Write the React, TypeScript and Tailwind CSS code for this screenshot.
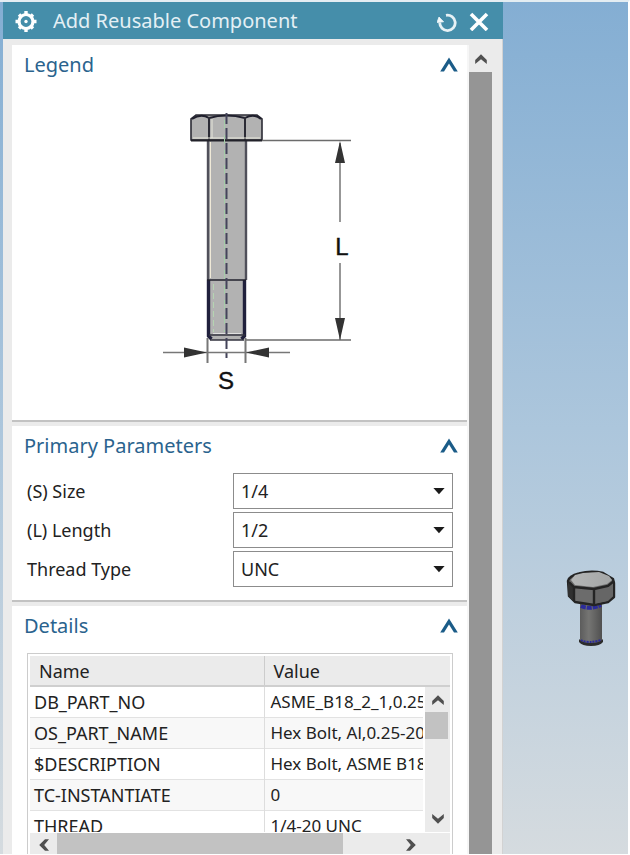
import React from "react";

const sizes = ["1/4", "5/16", "3/8", "1/2"];
const lengths = ["1/2", "3/4", "1", "1 1/4"];
const threads = ["UNC", "UNF"];

const details = [
  { name: "DB_PART_NO", value: "ASME_B18_2_1,0.25-20" },
  { name: "OS_PART_NAME", value: "Hex Bolt, Al,0.25-20 UNC" },
  { name: "$DESCRIPTION", value: "Hex Bolt, ASME B18.2.1" },
  { name: "TC-INSTANTIATE", value: "0" },
  { name: "THREAD", value: "1/4-20 UNC" },
];

const GearIcon = () => (
  <svg width="22" height="22" viewBox="0 0 22 22" fill="none" stroke="white" aria-hidden="true">
    <circle cx="11" cy="11.5" r="7" strokeWidth="3.2" />
    <circle cx="11" cy="11.5" r="1.7" fill="white" stroke="none" />
    <path
      d="M11 1v3M11 19v3M0.5 11.5h3M18.5 11.5h3M4 4.5l2 2M16 16.5l2 2M18 4.5l-2 2M6 16.5l-2 2"
      strokeWidth="3.4"
    />
  </svg>
);

const ResetIcon = () => (
  <svg width="22" height="22" viewBox="0 0 22 22" fill="none" aria-hidden="true">
    <path d="M9 5.3a7.7 7.7 0 1 1-6.2 7.2" stroke="#e6f1f5" strokeWidth="2.8" />
    <path d="M0 12.4L2 7l4.6 4.8z" fill="#f2f8fa" stroke="#f2f8fa" strokeWidth="0.8" />
  </svg>
);

const CloseIcon = () => (
  <svg width="20" height="20" viewBox="0 0 20 20" fill="none" aria-hidden="true">
    <path d="M2 3l16 16M18 3L2 19" stroke="white" strokeWidth="3.6" />
  </svg>
);

const Chevron = ({ className = "" }) => (
  <svg className={className} width="12" height="10" viewBox="0 0 12 10" aria-hidden="true">
    <path d="M0.2 6L6 0.2 11.8 6v4L6 5.2 0.2 10z" fill="#505050" />
  </svg>
);

const Section = ({ title, children }: { title: string; children: React.ReactNode }) => (
  <section className="border-b-2 border-[#c2c2c2] bg-white">
    <div className="flex h-[39px] items-center justify-between pl-3 pr-2">
      <h2 className="text-[20px] leading-6 text-[#2a638e]">{title}</h2>
      <button type="button" aria-label={"Collapse " + title}>
        <svg width="20" height="16" viewBox="0 0 20 16">
          <path d="M10 0.6L18.8 14.4h-3.8L10 6.6 5 14.4H1.2z" fill="#1b5c88" />
        </svg>
      </button>
    </div>
    {children}
  </section>
);

const Field = ({ id, label, options }: { id: string; label: string; options: string[] }) => (
  <div className="flex items-center">
    <label htmlFor={id} className="flex-1">
      {label}
    </label>
    <div className="relative w-[220px]">
      <select
        id={id}
        className="h-9 w-full appearance-none border border-[#8c8c8c] bg-white px-[7px] text-[18px] text-[#222222]"
      >
        {options.map((option) => (
          <option key={option}>{option}</option>
        ))}
      </select>
      <svg
        className="pointer-events-none absolute right-2 top-1/2 -translate-y-1/2"
        width="12"
        height="8"
        viewBox="0 0 12 8"
        aria-hidden="true"
      >
        <path d="M0.4 1h11.2L6 7.2z" fill="#1a1a1a" />
      </svg>
    </div>
  </div>
);

const BoltDiagram = () => (
  <svg className="block w-full" viewBox="12 84 455 336" role="img" aria-label="Hex bolt dimensions">
    {/* head */}
    <path d="M191 140V119l5-4h61l5 4v21z" fill="#b2b2b2" stroke="#2b2b35" strokeWidth="1.6" />
    <path d="M192 119q9-6 17-1q17-5 36 0q9-5 16 1" fill="none" stroke="#1e1e2c" strokeWidth="2" />
    <path d="M209 117v23M245 117v23" stroke="#2b2b35" strokeWidth="2" />
    <path d="M212 119v19M193 138h67" stroke="#e8e8dc" strokeWidth="1" />
    {/* shank */}
    <path d="M207 140h39v196l-3 4h-33l-3-4z" fill="#b2b2b2" />
    <path d="M208 140v140M246 140v140" stroke="#50505a" strokeWidth="2.4" />
    <path d="M210.5 142v136" stroke="#f0ead8" strokeWidth="1" />
    <path d="M191 140.5h71" stroke="#22222a" strokeWidth="2" />
    {/* thread */}
    <path d="M208.5 280v56l3 3M244.5 280v56l-3 3" fill="none" stroke="#20203c" strokeWidth="3.4" />
    <path d="M207 280h39" stroke="#20202c" strokeWidth="1.6" />
    <path d="M209 335h36M210 340h34" stroke="#33333f" strokeWidth="1.4" />
    <path d="M213 333.5h28" stroke="#e0e0e0" strokeWidth="1" />
    <path d="M213.5 284v48" stroke="#b5d4b2" strokeWidth="1" strokeDasharray="6 3" />
    {/* centre line */}
    <path d="M226.5 113v245" stroke="#44445a" strokeWidth="2" strokeDasharray="11 4" />
    <path d="M224.5 120v212" stroke="#a5cda8" strokeWidth="1" strokeDasharray="9 6" />
    {/* length */}
    <path d="M262 140.5h89M246 340h105" stroke="#6c6c6c" strokeWidth="1.6" />
    <path d="M340 143v79M340 263v77" stroke="#6c6c6c" strokeWidth="1.4" />
    <path d="M340 141l5 22h-10zM340 340l5-22h-10z" fill="#333333" />
    {/* size */}
    <path d="M163 352.5h127" stroke="#777777" strokeWidth="1.6" />
    <path d="M207.5 338v25M245.5 338v25" stroke="#777777" strokeWidth="2" />
    <path d="M207 352.5l-23-5v10zM246 352.5l23-5v10z" fill="#333333" />
    <g fontFamily="Liberation Sans, sans-serif" fontSize="24" fill="#111111" stroke="#111111" strokeWidth="0.4" textAnchor="middle">
      <text x="342" y="255">L</text>
      <text x="226" y="389">S</text>
    </g>
  </svg>
);

const BoltModel = () => (
  <svg width="50" height="78" viewBox="0 0 50 78" role="img" aria-label="Hex bolt model">
    <defs>
      <linearGradient id="shank">
        <stop offset="0" stopColor="#5c5c5c" />
        <stop offset="0.4" stopColor="#757573" />
        <stop offset="1" stopColor="#505050" />
      </linearGradient>
      <linearGradient id="face">
        <stop offset="0" stopColor="#b4b6b6" />
        <stop offset="1" stopColor="#a4a6a6" />
      </linearGradient>
    </defs>
    <path d="M14 30h22v41q-1 4-11 4t-11-4z" fill="url(#shank)" />
    <path d="M13 69q3 4 12 4t12-4v3q-3 4-12 4t-12-4z" fill="#2c2c2c" />
    <path d="M15 36q9 4 20-1" fill="none" stroke="#2b2b9c" strokeWidth="4" strokeDasharray="5 1" />
    <path d="M15 70q7 4 20 0" fill="none" stroke="#2b2b9c" strokeWidth="2" strokeDasharray="2 1" />
    <path
      d="M2 11q1-5 11-7.500Q25 0 37 3l10 6 1 4v14l-6 5-14 3-19-3-6-6z"
      fill="#6c6c6c"
      stroke="#242424"
      strokeWidth="2.4"
      strokeLinejoin="round"
    />
    <path d="M28 18l19-6v14l-5 5-14 3z" fill="#666666" />
    <path d="M2 12l6 5v15l-6-6z" fill="#303030" />
    <path d="M8 17v14M28 18v16M3 12l5 5 20 2 14-3 6-5" fill="none" stroke="#242424" strokeWidth="2.4" />
    <path d="M5 10l4-5 8-2 16-1 10 4 3 4-5 4-14 3-18-2z" fill="url(#face)" />
  </svg>
);

const DetailsTable = () => (
  <div className="ml-[15px] mr-3.5 mt-2 border border-[#cccccc] bg-white p-0.5">
    <div className="relative h-[176px] overflow-hidden">
      <table className="w-full table-fixed border-collapse">
        <thead>
          <tr className="h-[30px] border-b-2 border-[#cfcfcf] bg-[#ebebeb] text-left">
            <th className="w-[234px] border-r border-[#cccccc] p-0 pl-[9px] font-normal">Name</th>
            <th className="p-0 pl-[9px] font-normal">Value</th>
          </tr>
        </thead>
        <tbody>
          {details.map((row) => (
            <tr key={row.name} className="h-[31px] border-b border-[#e2e2e2] even:bg-[#f8f8f8]">
              <td className="border-r border-[#dddddd] p-0 pl-1">{row.name}</td>
              <td className="overflow-hidden whitespace-nowrap p-0 pl-1.5 text-[17px]">{row.value}</td>
            </tr>
          ))}
        </tbody>
      </table>
      <div className="absolute bottom-0 right-0 top-[31px] flex w-[27px] flex-col items-center border-l-2 border-white bg-[#ebebeb]">
        <div className="flex h-[25px] items-center">
          <Chevron />
        </div>
        <div className="h-[27px] w-full border-r-2 border-[#ebebeb] bg-[#c2c2c2]" />
        <div className="mb-2 mt-auto">
          <Chevron className="rotate-180" />
        </div>
      </div>
    </div>
    <div className="mt-px flex h-[23px] items-center bg-[#ebebeb]">
      <div className="flex w-[27px] justify-center">
        <Chevron className="-rotate-90" />
      </div>
      <div className="h-full w-[68%] bg-[#c2c2c2]" />
      <div className="ml-auto mr-[33px]">
        <Chevron className="rotate-90" />
      </div>
    </div>
  </div>
);

const Dialog = () => (
  <div className="flex flex-1 flex-col border-r border-[#d2d2d2] bg-[#ebebeb]">
    <header className="-mr-px flex h-[37px] shrink-0 items-center bg-[#458eaa] pl-3 pr-3.5 text-white">
      <GearIcon />
      <h1 className="ml-4 flex-1 text-[20px] leading-6 text-[#e4f0f5]">Add Reusable Component</h1>
      <button type="button" aria-label="Reset">
        <ResetIcon />
      </button>
      <button type="button" aria-label="Close" className="ml-2.5">
        <CloseIcon />
      </button>
    </header>
    <div className="flex min-h-0 flex-1 pl-[9px] pr-2.5">
      <div className="flex flex-1 flex-col gap-1 overflow-hidden pt-1.5">
        <Section title="Legend">
          <BoltDiagram />
        </Section>
        <Section title="Primary Parameters">
          <div className="flex flex-col gap-[3px] pb-[13px] pl-[15px] pr-3.5 pt-2">
            <Field id="size" label="(S) Size" options={sizes} />
            <Field id="length" label="(L) Length" options={lengths} />
            <Field id="thread" label="Thread Type" options={threads} />
          </div>
        </Section>
        <Section title="Details">
          <DetailsTable />
        </Section>
      </div>
      <div className="mt-1.5 flex w-[25px] flex-col border-l-2 border-[#f6f6f6]">
        <div className="flex h-[27px] items-center justify-center">
          <Chevron />
        </div>
        <div className="flex-1 bg-[#959595]" />
      </div>
    </div>
  </div>
);

export default function App() {
  return (
    <div className="flex h-screen overflow-hidden border-b border-r-2 border-t-2 border-b-white border-r-white border-t-[#e4edf2] bg-linear-to-b from-[#84aed3] via-[#acc6dc] to-[#d5dbdf] pl-[3px] font-['Noto_Sans','Open_Sans',sans-serif] text-[18px] leading-6 text-[#222222]">
      <Dialog />
      <div className="relative w-1/5">
        <div className="absolute left-1/2 top-2/3">
          <BoltModel />
        </div>
      </div>
    </div>
  );
}
